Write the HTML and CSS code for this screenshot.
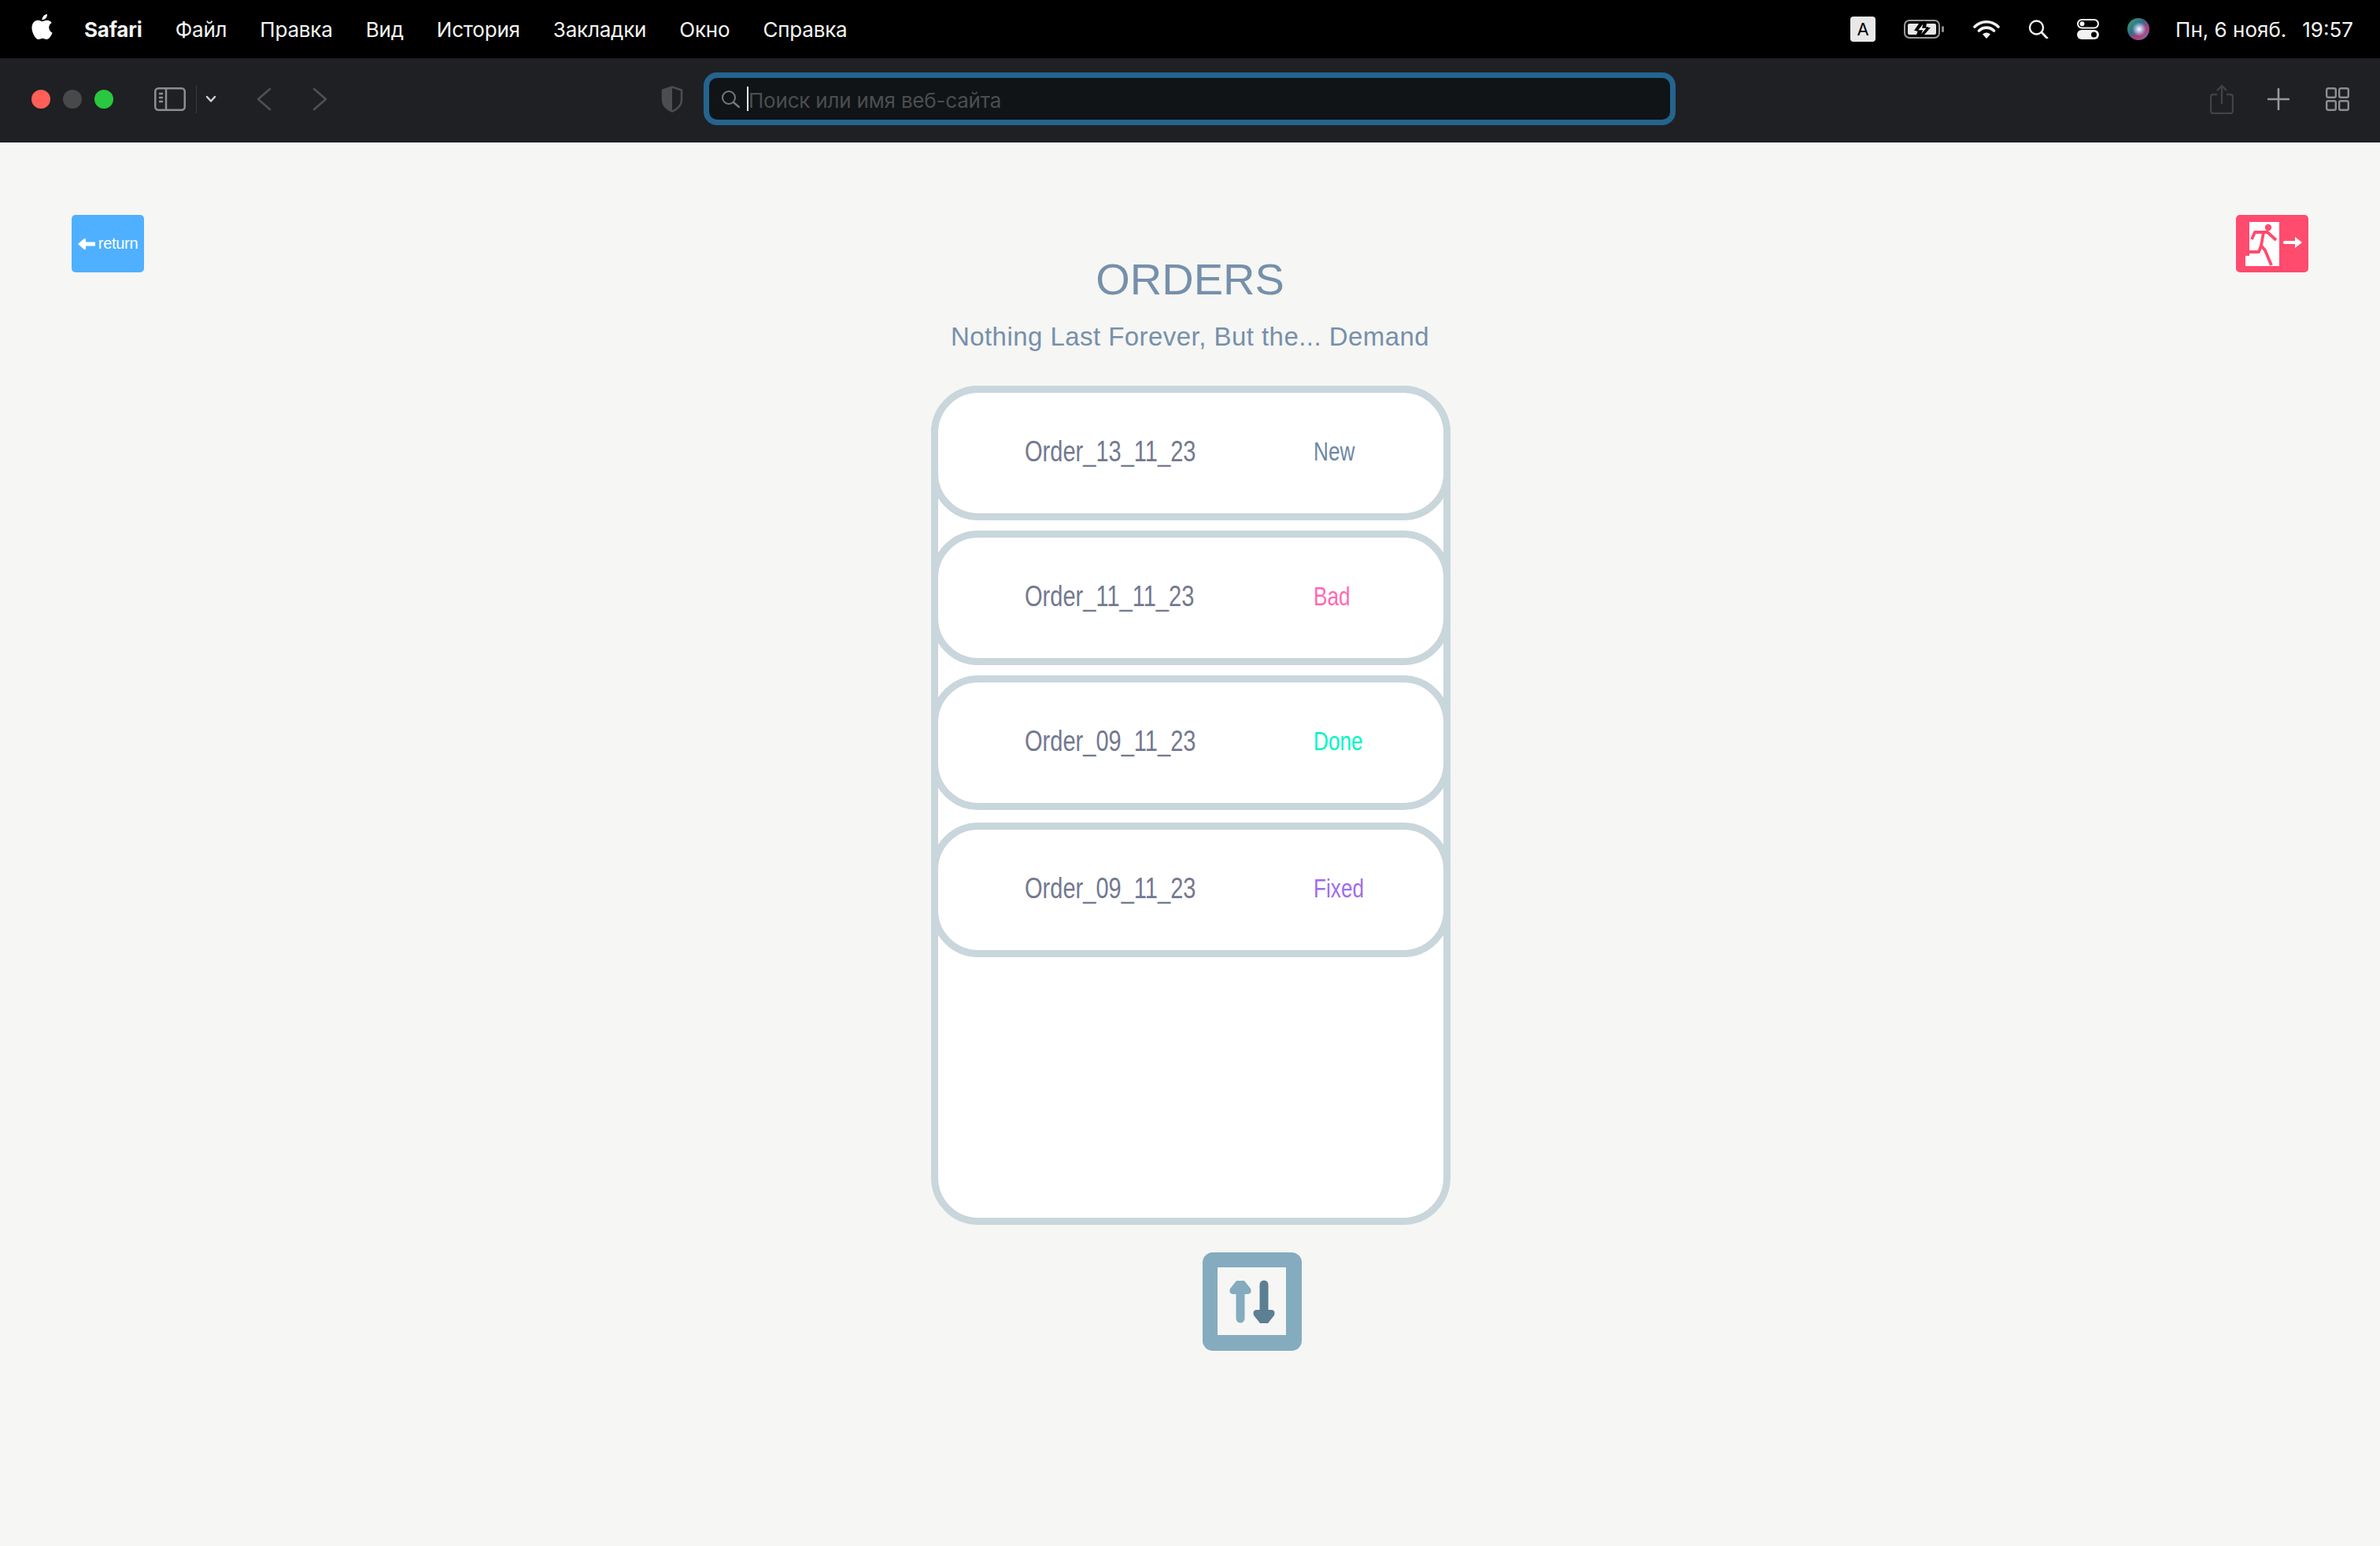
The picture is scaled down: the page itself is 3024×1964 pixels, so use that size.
FILE: index.html
```html
<!DOCTYPE html>
<html lang="ru">
<head>
  <meta charset="UTF-8">
  <meta name="viewport" content="width=device-width, initial-scale=1.0">
  <title>Orders</title>
  <link rel="stylesheet" href="styles.css">
</head>
<body>

<!-- mac menu bar -->
<div class="menubar">
  <svg class="apple" width="27" height="32" viewBox="2.5 0 19 24"><path fill="#fff" d="M12.152 6.896c-.948 0-2.415-1.078-3.96-1.04-2.04.027-3.91 1.183-4.961 3.014-2.117 3.675-.546 9.103 1.519 12.09 1.013 1.454 2.208 3.09 3.792 3.039 1.52-.065 2.09-.987 3.935-.987 1.831 0 2.35.987 3.96.948 1.637-.026 2.676-1.48 3.676-2.948 1.156-1.688 1.636-3.325 1.662-3.415-.039-.013-3.182-1.221-3.22-4.857-.026-3.04 2.48-4.494 2.597-4.559-1.429-2.09-3.623-2.324-4.39-2.376-2-.156-3.675 1.09-4.61 1.09zM15.53 3.83c.843-1.012 1.4-2.427 1.245-3.83-1.207.052-2.662.805-3.532 1.818-.78.896-1.454 2.338-1.273 3.714 1.338.104 2.715-.688 3.559-1.701"/></svg>
  <nav class="menu">
    <span class="menu-app">Safari</span>
    <span>Файл</span>
    <span>Правка</span>
    <span>Вид</span>
    <span>История</span>
    <span>Закладки</span>
    <span>Окно</span>
    <span>Справка</span>
  </nav>
  <div class="status-icons">
    <span class="input-badge">A</span>
    <svg width="52" height="24" viewBox="0 0 52 24"><rect x="1" y="1" width="44" height="22" rx="6" fill="none" stroke="#9a9a9a" stroke-width="2"/><path d="M5 7a2 2 0 0 1 2-2h12l-6 9h5l-2 5H7a2 2 0 0 1-2-2zM41 7a2 2 0 0 0-2-2H29l-1 5h6l-8 9h13a2 2 0 0 0 2-2z" fill="#e8e8e8"/><path d="M26 2l-9 12h6l-3 8 10-12h-6z" fill="#fff" stroke="#000" stroke-width="1.5"/><rect x="48" y="8" width="3" height="8" rx="1.5" fill="#8a8a8a"/></svg>
    <svg width="34" height="24" viewBox="0 0 34 24"><path d="M2 9a21 21 0 0 1 30 0M7.500 14a13.500 13.500 0 0 1 19 0" fill="none" stroke="#f2f2f2" stroke-width="3.600" stroke-linecap="round"/><path d="M12 18.500a7 7 0 0 1 10 0L17 24z" fill="#f2f2f2"/></svg>
    <svg width="26" height="24" viewBox="0 0 26 24"><circle cx="10.500" cy="10" r="8.500" fill="none" stroke="#f2f2f2" stroke-width="2.400"/><path d="M17 16l7 7.500" stroke="#f2f2f2" stroke-width="2.800" stroke-linecap="round"/></svg>
    <svg width="28" height="26" viewBox="0 0 28 26"><rect x="1" y="1" width="26" height="10.500" rx="5.250" fill="none" stroke="#f2f2f2" stroke-width="2"/><circle cx="6.500" cy="6.250" r="3" fill="#f2f2f2"/><rect y="14" width="28" height="12" rx="6" fill="#f2f2f2"/><circle cx="21.500" cy="20" r="3.500" fill="#000"/></svg>
    <svg width="28" height="28" viewBox="0 0 28 28">
      <defs>
        <radialGradient id="siriCore"><stop offset="0" stop-color="#fff"/><stop offset=".35" stop-color="#b9c7e6"/><stop offset="1" stop-color="#b9c7e6" stop-opacity="0"/></radialGradient>
        <linearGradient id="siriRing" x1="0" y1="0" x2="1" y2="1"><stop offset="0" stop-color="#3aa86b"/><stop offset=".4" stop-color="#2f6f8c"/><stop offset=".7" stop-color="#b83a7a"/><stop offset="1" stop-color="#2fa4c8"/></linearGradient>
      </defs>
      <circle cx="14" cy="14" r="14" fill="url(#siriRing)"/>
      <circle cx="15" cy="14" r="9" fill="url(#siriCore)"/>
    </svg>
    <span class="clock"><span>Пн, 6 нояб.</span><span>19:57</span></span>
  </div>
</div>

<!-- safari toolbar -->
<div class="toolbar">
  <div class="lights">
    <span class="light light-red"></span>
    <span class="light light-off"></span>
    <span class="light light-green"></span>
  </div>
  <svg class="sidebar-icon" width="40" height="30" viewBox="0 0 40 30"><rect x="1.250" y="1.250" width="37.500" height="27.500" rx="4" fill="none" stroke="#8d8e90" stroke-width="2.500"/><path d="M15 1v28" stroke="#8d8e90" stroke-width="2.500"/><path d="M6 8h5M6 13h5M6 18h5" stroke="#8d8e90" stroke-width="2.500"/></svg>
  <span class="tool-sep"></span>
  <svg class="sidebar-chevron" width="14" height="10" viewBox="0 0 14 10"><path d="M2 2l5 5.500L12 2" fill="none" stroke="#d0d0d0" stroke-width="2.500" stroke-linecap="round" stroke-linejoin="round"/></svg>
  <svg class="nav-back" width="20" height="30" viewBox="0 0 20 30"><path d="M18 2L3 15l15 13" fill="none" stroke="#505154" stroke-width="2.600" stroke-linecap="round" stroke-linejoin="round"/></svg>
  <svg class="nav-forward" width="20" height="30" viewBox="0 0 20 30"><path d="M3 2l15 13L3 28" fill="none" stroke="#505154" stroke-width="2.600" stroke-linecap="round" stroke-linejoin="round"/></svg>
  <svg class="shield" width="28" height="34" viewBox="0 0 28 34"><path d="M14 1.500l12 4v12c0 7-5 12-12 15-7-3-12-8-12-15v-12z" fill="none" stroke="#4c4d4f" stroke-width="2.500"/><path d="M14 1.500v31c-7-3-12-8-12-15v-12z" fill="#4c4d4f"/></svg>
  <div class="addressbar">
    <svg width="24" height="22" viewBox="0 0 24 22"><circle cx="10" cy="9" r="8" fill="none" stroke="#77787a" stroke-width="2"/><path d="M16 15l7 6" stroke="#77787a" stroke-width="2.400" stroke-linecap="round"/></svg>
    <span class="caret"></span>
    <span class="address-text">Поиск или имя веб-сайта</span>
  </div>
  <div class="tool-right">
    <svg width="30" height="38" viewBox="0 0 30 38"><path d="M9 13H4a3 3 0 0 0-3 3v18a3 3 0 0 0 3 3h22a3 3 0 0 0 3-3V16a3 3 0 0 0-3-3h-5" fill="none" stroke="#414245" stroke-width="2.400"/><path d="M15 25V2M9 8l6-6 6 6" fill="none" stroke="#414245" stroke-width="2.400"/></svg>
    <svg width="28" height="28" viewBox="0 0 28 28"><path d="M14 1v26M1 14h26" stroke="#97989a" stroke-width="2.600" stroke-linecap="round"/></svg>
    <svg class="tabs-icon" width="30" height="30" viewBox="0 0 30 30"><g fill="none" stroke="#8d8e90" stroke-width="2.400"><rect x="1.200" y="1.200" width="11.600" height="11.600" rx="2"/><rect x="17.200" y="1.200" width="11.600" height="11.600" rx="2"/><rect x="1.200" y="17.200" width="11.600" height="11.600" rx="2"/><rect x="17.200" y="17.200" width="11.600" height="11.600" rx="2"/></g></svg>
  </div>
</div>

<!-- page -->
<main class="page">
  <header class="page-head">
    <button class="btn-return">
      <svg width="22" height="16" viewBox="0 0 22 16"><path d="M0 8l8-7h2v4.500h12v5H10V15H8z" fill="#fff"/></svg>
      <span>return</span>
    </button>
    <div class="titles">
      <h1>ORDERS</h1>
      <p>Nothing Last Forever, But the... Demand</p>
    </div>
    <button class="btn-exit">
      <svg width="92" height="73" viewBox="0 0 92 73">
        <path d="M17 9h38v56H12V52h5z" fill="#fff"/>
        <circle cx="41" cy="16" r="4.200" fill="#ff4b6e"/>
        <path d="M20 31l4-9h16l11 10M35 22l-3 17 5 6 8 19M32 39l-3 8H14" fill="none" stroke="#ff4b6e" stroke-width="3.800" stroke-linejoin="round"/>
        <path d="M62 35h14" stroke="#fff" stroke-width="4" stroke-linecap="round"/>
        <path d="M75 28l9 7-9 7z" fill="#fff"/>
      </svg>
    </button>
  </header>

  <section class="orders">
    <div class="order">
      <span class="order-name">Order_13_11_23</span>
      <span class="order-status status-new">New</span>
    </div>
    <div class="order">
      <span class="order-name">Order_11_11_23</span>
      <span class="order-status status-bad">Bad</span>
    </div>
    <div class="order">
      <span class="order-name">Order_09_11_23</span>
      <span class="order-status status-done">Done</span>
    </div>
    <div class="order">
      <span class="order-name">Order_09_11_23</span>
      <span class="order-status status-fixed">Fixed</span>
    </div>
  </section>

  <div class="sort-row">
    <button class="btn-sort">
      <svg width="126" height="125" viewBox="0 0 126 125">
        <rect width="126" height="125" rx="13" fill="#85abbf"/>
        <rect x="19" y="19" width="87" height="86" fill="#f6f6f4"/>
        <path d="M48 50v34" stroke="#85abbf" stroke-width="11" stroke-linecap="round"/>
        <path d="M43 36h10l8 10q2 6-3 7H38q-5-1-3-7z" fill="#85abbf"/>
        <path d="M78 41v34" stroke="#5c7f93" stroke-width="11" stroke-linecap="round"/>
        <path d="M73 90h10l8-10q2-6-3-7H68q-5 1-3 7z" fill="#5c7f93"/>
      </svg>
    </button>
  </div>
</main>

</body>
</html>
```

FILE: styles.css
```css
* {
  box-sizing: border-box;
}
body {
  margin: 0;
  background-color: #f6f6f4;
  font-family: 'Liberation Sans', sans-serif;
  min-height: 1964px;
}
button {
  border: none;
  padding: 0;
  background: none;
  cursor: pointer;
  font-family: inherit;
}
svg {
  display: block;
  flex: none;
}

/* menu bar */
.menubar {
  height: 74px;
  background-color: #000;
  color: #f4f4f4;
  display: flex;
  align-items: center;
  padding: 0 34px 0 40px;
  font-family: Inter, sans-serif;
  font-size: 26px;
}
.apple {
  margin-top: -6px;
}
.menu {
  display: flex;
  gap: 42px;
  margin-left: 40px;
  letter-spacing: -0.2px;
}
.menu-app {
  font-weight: 700;
}
.status-icons {
  margin-left: auto;
  display: flex;
  align-items: center;
  gap: 36px;
}
.input-badge {
  width: 32px;
  height: 32px;
  border-radius: 4px;
  background-color: #e8e8e8;
  color: #000;
  font-size: 22px;
  display: flex;
  align-items: center;
  justify-content: center;
}
.clock {
  display: flex;
  gap: 20px;
  margin-left: -3px;
}

/* toolbar */
.toolbar {
  height: 107px;
  background-color: #1f2023;
  display: flex;
  align-items: center;
  padding: 0 39px 4px 40px;
}
.lights {
  display: flex;
  gap: 16px;
}
.light {
  width: 24px;
  height: 24px;
  border-radius: 50%;
}
.light-red { background-color: #ff5f57; }
.light-off { background-color: #48494b; }
.light-green { background-color: #28c840; }
.sidebar-icon {
  margin-left: 52px;
}
.tool-sep {
  width: 1px;
  height: 36px;
  margin-left: 13px;
  background-color: #3a3b3e;
}
.sidebar-chevron {
  margin-left: 11px;
}
.nav-back {
  margin-left: 50px;
}
.nav-forward {
  margin-left: 51px;
}
.shield {
  margin-left: 424px;
}
.addressbar {
  width: 1235px;
  height: 67px;
  margin-left: 26px;
  border: 7px solid #24648f;
  border-radius: 17px;
  background-color: #101417;
  display: flex;
  align-items: center;
  padding-left: 15px;
}
.caret {
  width: 2px;
  height: 31px;
  margin-left: 9px;
  background-color: #fff;
}
.address-text {
  font-family: Inter, sans-serif;
  font-size: 26px;
  letter-spacing: -0.2px;
  color: #4c4d4f;
  padding-top: 3px;
}
.tool-right {
  margin-left: auto;
  display: flex;
  align-items: center;
  gap: 43px;
}
.tabs-icon {
  margin-left: 3px;
}

/* page */
.page {
  padding: 92px 91px 0;
}
.page-head {
  display: grid;
  grid-template-columns: 1fr auto 1fr;
  align-items: start;
}
.btn-return,
.btn-exit {
  width: 92px;
  height: 73px;
  border-radius: 5px;
  overflow: hidden;
}
.btn-return {
  background-color: #4fb0ff;
  color: #fff;
  font-size: 20px;
  letter-spacing: -0.3px;
  display: flex;
  align-items: center;
  justify-content: center;
  gap: 4px;
}
.btn-exit {
  background-color: #ff4b6e;
  justify-self: end;
}
.titles {
  text-align: center;
  color: #7690ab;
  padding-top: 50px;
}
.titles h1 {
  margin: 0;
  font-size: 56px;
  font-weight: 400;
  line-height: 64px;
}
.titles p {
  margin: 21px 0 0;
  font-size: 33px;
  line-height: 40px;
  letter-spacing: 0.45px;
}

.orders {
  width: 660px;
  height: 1066px;
  margin: 42px 0 0 1092px;
  border: 9px solid #c9d6dc;
  border-radius: 60px;
  background-color: #fff;
}
.order {
  height: 171px;
  margin: 0 -9px 13px;
  border: 9px solid #c9d6dc;
  border-radius: 60px;
  background-color: #fff;
  display: grid;
  grid-template-columns: 367px auto;
  align-items: center;
  padding: 0 0 4px 110px;
}
.order:first-child {
  margin-top: -9px;
}
.order:nth-child(3) {
  margin-bottom: 16px;
}
.order-name,
.order-status {
  display: inline-block;
  transform-origin: left center;
}
.order-name {
  font-size: 37px;
  color: #73798f;
  transform: scaleX(0.785);
}
.order-status {
  font-size: 34px;
  transform: scaleX(0.77);
}
.status-new { color: #6f87a3; }
.status-bad { color: #ff69b4; }
.status-done { color: #00f5c4; }
.status-fixed { color: #a06ee8; }

.sort-row {
  width: 660px;
  margin: 35px 0 0 1092px;
  padding-left: 345px;
}
.btn-sort {
  display: block;
}
```
